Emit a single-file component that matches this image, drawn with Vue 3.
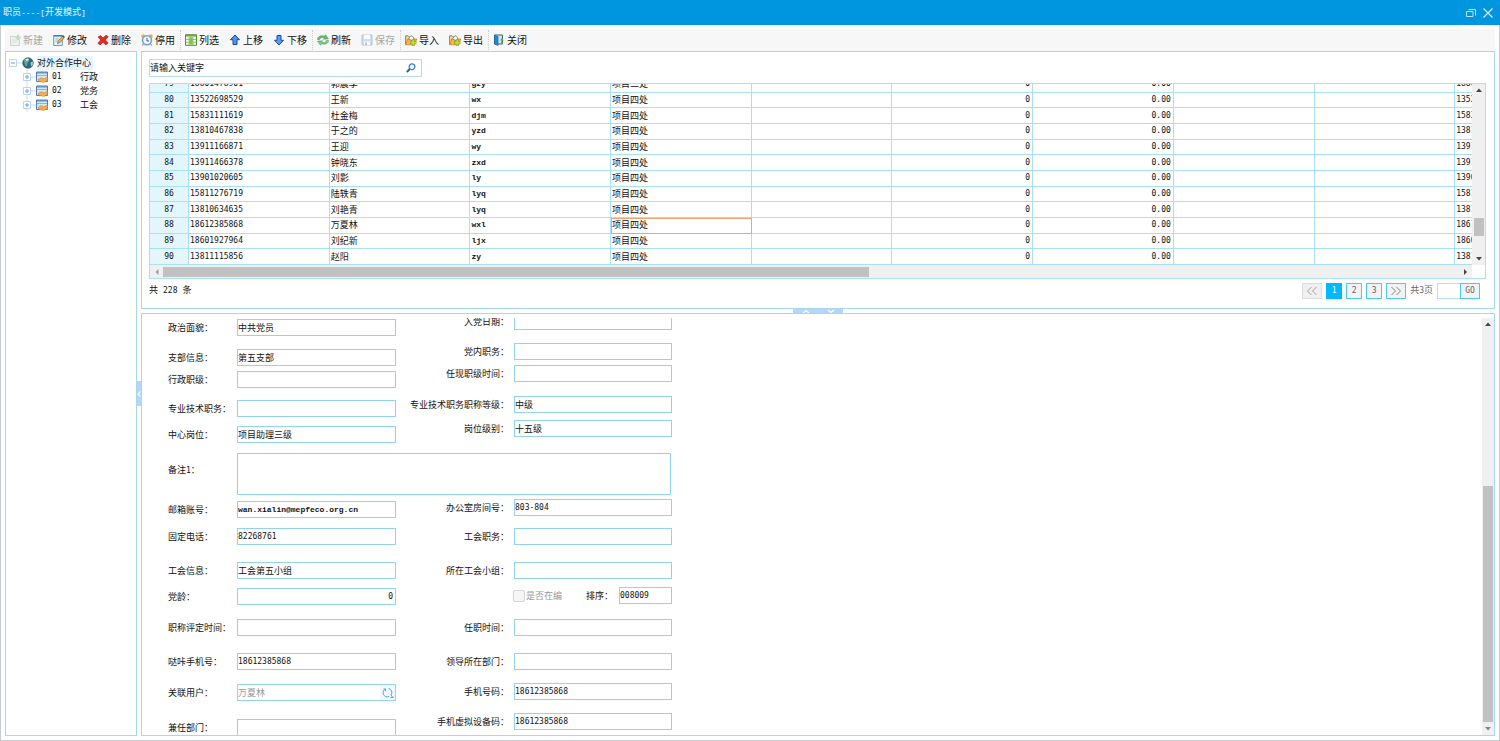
<script setup>
import { ref } from 'vue'

const toolGroups = [
  [
    { label: '新建', icon: 'new', disabled: true },
    { label: '修改', icon: 'edit' },
    { label: '删除', icon: 'delete' },
    { label: '停用', icon: 'clock' }
  ],
  [
    { label: '列选', icon: 'columns' },
    { label: '上移', icon: 'up' },
    { label: '下移', icon: 'down' }
  ],
  [
    { label: '刷新', icon: 'refresh' },
    { label: '保存', icon: 'save', disabled: true }
  ],
  [
    { label: '导入', icon: 'transfer' },
    { label: '导出', icon: 'transfer' }
  ],
  [{ label: '关闭', icon: 'close' }]
]

const tree = [
  { code: '01', name: '行政' },
  { code: '02', name: '党务' },
  { code: '03', name: '工会' }
]

const rows = [
  { no: 79, phone: '18801478901', name: '郭晨孚', py: 'gzy', dept: '项目三处', dev: '18801478901' },
  { no: 80, phone: '13522698529', name: '王新', py: 'wx', dept: '项目四处', dev: '13522698529' },
  { no: 81, phone: '15831111619', name: '杜金梅', py: 'djm', dept: '项目四处', dev: '15831111619' },
  { no: 82, phone: '13810467838', name: '于之的', py: 'yzd', dept: '项目四处', dev: '13810467838' },
  { no: 83, phone: '13911166871', name: '王迎', py: 'wy', dept: '项目四处', dev: '13911166871' },
  { no: 84, phone: '13911466378', name: '钟晓东', py: 'zxd', dept: '项目四处', dev: '13911466378' },
  { no: 85, phone: '13901020605', name: '刘影', py: 'ly', dept: '项目四处', dev: '13901020605' },
  { no: 86, phone: '15811276719', name: '陆轶青', py: 'lyq', dept: '项目四处', dev: '15811276719' },
  { no: 87, phone: '13810634635', name: '刘艳青', py: 'lyq', dept: '项目四处', dev: '13810634635' },
  { no: 88, phone: '18612385868', name: '万夏林', py: 'wxl', dept: '项目四处', dev: '18612385868', active: true },
  { no: 89, phone: '18601927964', name: '刘纪新', py: 'ljx', dept: '项目四处', dev: '18601927964' },
  { no: 90, phone: '13811115856', name: '赵阳', py: 'zy', dept: '项目四处', dev: '13811115856' }
]

const keyword = ref('')
const pageInput = ref('')
const note = ref('')
const employed = ref(false)

const topLeft = ref([
  { id: 'political', label: '政治面貌：', value: '中共党员' },
  { id: 'branch', label: '支部信息：', value: '第五支部' },
  { id: 'rank', label: '行政职级：', value: '' },
  { id: 'tech', label: '专业技术职务：', value: '' },
  { id: 'post', label: '中心岗位：', value: '项目助理三级' }
])
const topRight = ref([
  { id: 'joinDate', label: '入党日期：', value: '' },
  { id: 'partyPost', label: '党内职务：', value: '' },
  { id: 'rankTime', label: '任现职级时间：', value: '' },
  { id: 'techLevel', label: '专业技术职务职称等级：', value: '中级' },
  { id: 'postLevel', label: '岗位级别：', value: '十五级' }
])
const lowLeft = ref([
  { id: 'mail', label: '邮箱账号：', value: 'wan.xialin@mepfeco.org.cn', latin: true },
  { id: 'tel', label: '固定电话：', value: '82268761', num: true },
  { id: 'union', label: '工会信息：', value: '工会第五小组' },
  { id: 'partyAge', label: '党龄：', value: '0', num: true, right: true },
  { id: 'assess', label: '职称评定时间：', value: '' },
  { id: 'daka', label: '哒咔手机号：', value: '18612385868', num: true },
  { id: 'user', label: '关联用户：', value: '万夏林', lookup: true },
  { id: 'partTime', label: '兼任部门：', value: '' }
])
const lowRight = ref([
  { id: 'room', label: '办公室房间号：', value: '803-804', num: true },
  { id: 'unionPost', label: '工会职务：', value: '' },
  { id: 'unionGroup', label: '所在工会小组：', value: '' },
  { id: 'order', label: '排序：', value: '008009', num: true, order: true },
  { id: 'tenure', label: '任职时间：', value: '' },
  { id: 'leaderDept', label: '领导所在部门：', value: '' },
  { id: 'mobile', label: '手机号码：', value: '18612385868', num: true },
  { id: 'device', label: '手机虚拟设备码：', value: '18612385868', num: true }
])
const topBlocks = [
  { key: 'tl', side: 'left', fields: topLeft },
  { key: 'tr', side: 'right', fields: topRight }
]
const lowBlocks = [
  { key: 'll', side: 'left', fields: lowLeft },
  { key: 'lr', side: 'right', fields: lowRight }
]
</script>

<template>
  <div class="window">
    <header class="titlebar">
      <h1>职员<span class="mono">----[</span>开发模式<span class="mono">]</span></h1>
      <div class="win-buttons">
        <button type="button" aria-label="还原">
          <svg width="10" height="10" viewBox="0 0 10 10"><path d="M.5 3.500h6.500v5h-6.500zM2.500 1.500h7v6" fill="none" stroke="#b9e3f8" /></svg>
        </button>
        <button type="button" aria-label="关闭窗口">
          <svg width="10" height="10" viewBox="0 0 10 10"><path d="M.5.5l9 9M9.500.5l-9 9" fill="none" stroke="#d6effb" stroke-width="1.200" /></svg>
        </button>
      </div>
    </header>

    <div class="body">
      <nav class="toolbar">
        <div v-for="(group, gi) in toolGroups" :key="gi" class="tool-group">
          <button v-for="t in group" :key="t.label" type="button" class="tool" :disabled="t.disabled">
            <svg width="12" height="12" viewBox="0 0 12 12">
              <g v-if="t.icon === 'new'">
                <path d="M1.500 2.500h6l3 3v6h-9z" fill="#eef2ee" stroke="#cdd3d0" />
                <path d="M3 6h5M3 8h5" stroke="#dde1df" />
                <path d="M6.500 2.500h1.500V.8h2v1.700h1.700v2H10v1.700H8V4.500H6.500z" fill="#b9dcb9" />
              </g>
              <g v-else-if="t.icon === 'edit'">
                <path d="M.7 1.500h8.600v10H.7z" fill="#e3f1fc" stroke="#6d9cc8" />
                <path d="M.7 1.800h8.600" stroke="#2f7fc2" stroke-width="1.500" />
                <path d="M2.500 5h3M2.500 7h2" stroke="#86b4d8" />
                <path d="M4.500 9.500l.7-2.700L9.800 2l1.700 1.500L7 8.600z" fill="#f1b43d" stroke="#705230" stroke-width=".6" />
                <path d="M9 2.700l1-1.700 1.700 1.500-1 1.300z" fill="#46556b" />
              </g>
              <path v-else-if="t.icon === 'delete'" d="M1 3l2.500-1.500L6 4l3-2.800 2.200 1.500L8.300 6l2.900 3-2.400 2L6 8.200 3 11 .8 9.200 3.700 6z" fill="#e42a24" stroke="#b51512" stroke-width=".6" />
              <g v-else-if="t.icon === 'clock'">
                <circle cx="2.300" cy="2.300" r="2" fill="#f2b33c" /><circle cx="9.700" cy="2.300" r="2" fill="#f2b33c" />
                <path d="M2.500 10L1.300 11.500M9.500 10l1.200 1.500" stroke="#c98720" stroke-width="1.200" />
                <circle cx="6" cy="6.300" r="4.500" fill="#eef6fd" stroke="#6fa3d8" stroke-width="1.600" />
                <path d="M6 4v3h2" fill="none" stroke="#384b66" stroke-width=".9" />
              </g>
              <g v-else-if="t.icon === 'columns'">
                <path d="M.5.7h11v10.600H.5z" fill="#f5fbea" stroke="#4f8f32" />
                <path d="M1 1.800h10" stroke="#68a944" stroke-width="1.500" />
                <path d="M4 3v8M8 3v8M1 5.500h10M1 8.300h10" stroke="#82b95c" stroke-width=".8" />
                <path d="M4.500 3.200h3.200v7.500H4.500z" fill="#82c24f" />
              </g>
              <path v-else-if="t.icon === 'up'" d="M6 1l4.500 4.700H8v4.800H4V5.700H1.500z" fill="#4f93ee" stroke="#1848b4" />
              <path v-else-if="t.icon === 'down'" d="M6 11L1.500 6.300H4V1.500h4v4.800h2.500z" fill="#5a9cf0" stroke="#1848b4" />
              <g v-else-if="t.icon === 'refresh'">
                <path d="M.3 5.500C.6 2.300 4 .9 7.500 2.200L8.600.7l2.900 4.200-5.200.4 1-1.400C5.200 3 3.300 3.500 2.800 5.500z" fill="#6cb872" stroke="#36864a" stroke-width=".4" />
                <path d="M11.700 6.500c-.3 3.200-3.700 4.600-7.200 3.300l-1.100 1.500L.5 7.100l5.200-.4-1 1.400c2.100.9 4 .4 4.500-1.600z" fill="#7fc683" stroke="#36864a" stroke-width=".4" />
              </g>
              <g v-else-if="t.icon === 'save'">
                <path d="M1 1h10v10H1z" fill="#cfdded" stroke="#b3c5da" />
                <path d="M3 1h6v4H3zM3 7.500h6V11H3z" fill="#fbfcfe" />
                <path d="M4 8.500h2V11H4z" fill="#b3c5da" />
              </g>
              <g v-else-if="t.icon === 'transfer'">
                <path d="M.6 10.500V1.800h2.600l1 1.200h2v2" fill="#f7dd92" stroke="#7d7b68" stroke-width=".9" />
                <path d="M.6 10.800L2.600 5h9.200L9.500 10.800z" fill="#f2b34a" stroke="#b98126" stroke-width=".7" />
                <path d="M3.500 5L6 1.500l3 2.300-1.500 3z" fill="#f7f7f0" stroke="#75704f" stroke-width=".7" />
                <path d="M5.500 7.500h1.700V5.600h2.200v1.900h1.800v2.200H9.400v2H7.200v-2H5.500z" fill="#c3e32c" stroke="#6b9416" stroke-width=".5" />
              </g>
              <g v-else>
                <path d="M1.500 1h8v9h-8z" fill="#cfe5ec" stroke="#40657c" />
                <path d="M1.500 1L5 2.500v9L1.500 10z" fill="#2687d2" stroke="#155b96" stroke-width=".6" />
                <path d="M8.200 10V6.500H7L8.800 4l1.900 2.500H9.500V10z" fill="#66b62e" />
              </g>
            </svg>
            <span>{{ t.label }}</span>
          </button>
        </div>
      </nav>

      <div class="workspace">
        <aside class="tree-panel">
          <ul class="tree">
            <li class="tree-row root">
              <svg class="toggle" width="14" height="14" viewBox="0 0 14 14"><path d="M1.500 3.500h7v7h-7z" fill="#fff" stroke="#b9d4f4" /><path d="M3 7h4" stroke="#6f9cda" /><path d="M9 7h5" stroke="#c9dcf5" /></svg>
              <svg width="12" height="12" viewBox="0 0 12 12">
                <circle cx="6" cy="6" r="5.300" fill="#2e6a86" stroke="#1f4e6b" stroke-width=".6" />
                <path d="M2 3.500C3 1.500 5 1 6.500 1.500L7 3.500 5.500 6l-.7 3.500L3 8z" fill="#62ad8d" /><path d="M8.500 5.500l2.300-1 .2 3-1.800 2z" fill="#9fd3b2" />
                <path d="M3 2.500l3-1 1 1.500-2 1z" fill="#d8ecec" />
              </svg>
              <a href="#" class="root-name">对外合作中心</a>
            </li>
            <li v-for="n in tree" :key="n.code" class="tree-row child">
              <svg class="toggle" width="14" height="14" viewBox="0 0 14 14"><path d="M1.500 3.500h7v7h-7z" fill="#fff" stroke="#b9d4f4" /><path d="M3 7h4M5 5v4" stroke="#6f9cda" /><path d="M9 7h5M5 0v3M5 11v3" stroke="#c9dcf5" /></svg>
              <svg width="12" height="12" viewBox="0 0 12 12">
                <path d="M.5 1h11v9.500H.5z" fill="#d5e6f5" stroke="#4c7fae" />
                <path d="M1 1.800h10" stroke="#5b94c6" stroke-width="1.400" /><path d="M1 4.500h10" stroke="#8eb6d8" />
                <path d="M2 8.500l3-1.800 3 1 3.500-1.500v3.300L8 11.400 3 10.500z" fill="#f2ad52" stroke="#c27a24" stroke-width=".5" />
              </svg>
              <a href="#"><span class="num code">{{ n.code }}</span><span>{{ n.name }}</span></a>
            </li>
          </ul>
        </aside>

        <div class="v-split"><button type="button" aria-label="收起目录"><svg width="4" height="8" viewBox="0 0 4 8"><path d="M3.500 1.500L1 4l2.500 2.500" fill="none" stroke="#fff" stroke-width="1.200" /></svg></button></div>

        <main class="content">
          <section class="list-panel">
            <form class="search" role="search" @submit.prevent>
              <input v-model="keyword" type="text" placeholder="请输入关键字" aria-label="请输入关键字" />
              <button type="submit" aria-label="搜索">
                <svg width="10" height="10" viewBox="0 0 10 10"><circle cx="6" cy="3.800" r="2.900" fill="#eaf5fd" stroke="#3f7fca" stroke-width="1.300" /><path d="M3.800 6L.9 9" stroke="#2b57ad" stroke-width="1.900" /></svg>
              </button>
            </form>

            <div class="grid">
              <div class="grid-main">
                <div class="grid-view">
                  <table>
                    <colgroup><col class="col-no" /><col v-for="i in 10" :key="i" /></colgroup>
                    <tbody>
                      <tr v-for="r in rows" :key="r.no">
                        <th scope="row">{{ r.no }}</th>
                        <td class="num">{{ r.phone }}</td>
                        <td>{{ r.name }}</td>
                        <td class="latin">{{ r.py }}</td>
                        <td :class="{ active: r.active }">{{ r.dept }}</td>
                        <td></td>
                        <td class="num end">0</td>
                        <td class="num end">0.00</td>
                        <td></td>
                        <td></td>
                        <td class="num">{{ r.dev }}</td>
                      </tr>
                    </tbody>
                  </table>
                </div>
                <div class="scroll-v">
                  <svg width="12" height="12" viewBox="0 0 12 12"><path d="M3 8l3-3.500L9 8z" fill="#444" /></svg>
                  <div class="thumb-v"></div>
                  <svg width="12" height="12" viewBox="0 0 12 12"><path d="M3 4l3 3.500L9 4z" fill="#444" /></svg>
                </div>
              </div>
              <div class="scroll-h">
                <svg width="13" height="12" viewBox="0 0 13 12"><path d="M8.500 3L5.500 6l3 3z" fill="#999" /></svg>
                <div class="thumb-h"></div>
                <svg width="13" height="12" viewBox="0 0 13 12"><path d="M5 3l3 3-3 3z" fill="#444" /></svg>
              </div>
            </div>

            <footer class="pager">
              <span>共<span class="num total">228</span>条</span>
              <div class="pages">
                <button type="button" class="wide" disabled aria-label="上一页"><svg width="12" height="10" viewBox="0 0 12 10"><path d="M5.500 1l-4 4 4 4M10.500 1l-4 4 4 4" fill="none" stroke="#999" stroke-width=".9" /></svg></button>
                <button type="button" class="current">1</button>
                <button type="button">2</button>
                <button type="button">3</button>
                <button type="button" class="wide" aria-label="下一页"><svg width="12" height="10" viewBox="0 0 12 10"><path d="M1.500 1l4 4-4 4M6.500 1l4 4-4 4" fill="none" stroke="#777" stroke-width=".9" /></svg></button>
                <span class="page-total">共<span class="num">3</span>页</span>
                <div class="goto"><input v-model="pageInput" type="text" aria-label="页码" /><button type="button" class="wide">GO</button></div>
              </div>
            </footer>
          </section>

          <div class="h-split"><button type="button" aria-label="调整面板"><svg width="50" height="4" viewBox="0 0 50 4"><path d="M10 4l3-2.500L16 4M35 1l3 2.500L41 1" fill="none" stroke="#fff" stroke-width="1.200" /></svg></button></div>

          <section class="detail-panel">
            <form class="detail" @submit.prevent>
              <div class="blocks upper">
                <div v-for="b in topBlocks" :key="b.key" class="block" :class="b.side">
                  <div v-for="f in b.fields.value" :key="f.id" class="field">
                    <label :for="f.id">{{ f.label }}</label>
                    <input :id="f.id" v-model="f.value" type="text" />
                  </div>
                </div>
              </div>
              <div class="note">
                <label for="note">备注<span class="num">1</span>：</label>
                <textarea id="note" v-model="note"></textarea>
              </div>
              <div class="blocks lower">
                <div v-for="b in lowBlocks" :key="b.key" class="block" :class="b.side">
                  <div v-for="f in b.fields.value" :key="f.id" class="field" :class="{ ordered: f.order }">
                    <span v-if="f.order" class="check"><input id="employed" v-model="employed" type="checkbox" disabled /><label for="employed">是否在编</label></span>
                    <label :for="f.id">{{ f.label }}</label>
                    <div v-if="f.lookup" class="lookup">
                      <input :id="f.id" v-model="f.value" type="text" disabled />
                      <button type="button" aria-label="选择用户"><svg width="12" height="12" viewBox="0 0 12 12"><path d="M3.500 2A4 4 0 0 0 7 9.500M6.500 1.500A4 4 0 0 1 9 8l2 2.500M8.500 10.500h3M1.500 2h2v2" fill="none" stroke="#4ba6de" /></svg></button>
                    </div>
                    <input v-else :id="f.id" v-model="f.value" type="text" :class="{ num: f.num, latin: f.latin, end: f.right }" />
                  </div>
                </div>
              </div>
            </form>
            <div class="scroll-v tall">
              <svg width="12" height="12" viewBox="0 0 12 12"><path d="M3 8l3-3.500L9 8z" fill="#444" /></svg>
              <div class="thumb-v"></div>
              <svg width="12" height="12" viewBox="0 0 12 12"><path d="M3 4l3 3.500L9 4z" fill="#888" /></svg>
            </div>
          </section>
        </main>
      </div>
    </div>
  </div>
</template>

<style>
html, body, #app { height: 100%; }
body { margin: 0; overflow: hidden; }
</style>

<style scoped>
* { box-sizing: border-box; }
.window {
  --line: #a6d9e8;
  --cell: #a9e0f4;
  height: 100vh;
  display: flex;
  flex-direction: column;
  background: #fff;
  color: #111;
  font: 9px/14px "Noto Sans CJK SC", sans-serif;
}
button, input, textarea { font: inherit; color: inherit; margin: 0; padding: 0; border-radius: 0; outline: none; }
button { border: 0; background: none; }
svg { display: block; flex: none; }
a { color: inherit; text-decoration: none; }
.num, th { font-family: "DejaVu Sans Mono", monospace; font-size: 8px; }
.mono { font-family: "Liberation Mono", monospace; font-size: 8px; }
.latin { font-family: "Liberation Mono", monospace; font-size: 8px; font-weight: 700; }
.end { text-align: right; }

.titlebar { height: 25px; flex: none; display: flex; align-items: center; justify-content: space-between; padding: 0 7px 0 3px; background: #0096df; color: #e8f6fd; }
.titlebar h1 { margin: 0; font-size: 9px; font-weight: 400; }
.win-buttons { display: flex; gap: 7px; }

.body { flex: 1; min-height: 0; display: flex; flex-direction: column; padding: 4px; border: 1px solid #c6cbd0; border-top: 0; }
.toolbar { height: 22px; flex: none; display: flex; align-items: center; background: #f7f7f7; font-size: 10px; }
.tool-group { display: flex; gap: 10px; padding: 0 5px 0 4px; height: 20px; }
.tool-group + .tool-group { border-left: 1px dotted #a9dcec; }
.tool { display: flex; align-items: center; gap: 2px; white-space: nowrap; }
.tool:disabled { color: #a6a6a6; }

.workspace { flex: 1; min-height: 0; display: flex; }
.tree-panel { width: 132px; flex: none; border: 1px solid var(--line); }
.tree { list-style: none; margin: 0; padding: 4px 2px; }
.tree-row { display: flex; align-items: center; height: 14px; }
.root .root-name { margin-left: 3px; padding: 0 2px 0 0; background: #eaf4fe; }
.child { padding-left: 14px; }
.child a { display: flex; margin-left: 4px; }
.code { width: 28px; }
.v-split { width: 4px; flex: none; display: flex; align-items: center; }
.v-split button { width: 4px; height: 25px; background: #b5d6fa; display: grid; place-items: center; }
.content { flex: 1; min-width: 0; display: flex; flex-direction: column; }

.list-panel { flex: none; border: 1px solid var(--line); padding: 7px 8px 9px 7px; }
.search { width: 273px; height: 18px; display: flex; border: 1px solid #b7dbe9; }
.search input { flex: 1; min-width: 0; border: 0; }
.search input::placeholder { color: #111; opacity: 1; }
.search button { width: 20px; display: grid; place-items: center; }

.grid { margin-top: 6px; border: 1px solid var(--cell); }
.grid-main { display: flex; height: 181px; }
.grid-view { flex: 1; min-width: 0; overflow: hidden; display: flex; align-items: flex-end; }
table { table-layout: fixed; flex: none; width: 1446px; height: 188px; border-collapse: separate; border-spacing: 0; }
.col-no { width: 39px; }
th, td { padding: 0 1px; border-right: 1px solid var(--cell); border-bottom: 1px solid var(--cell); line-height: 14px; font-weight: 400; text-align: left; white-space: nowrap; overflow: hidden; }
td.latin { font-weight: 700; }
th { background: #e2f6fc; text-align: center; }
td.end { text-align: right; padding-right: 2px; }
td.active { outline: 1px solid #f2a36f; outline-offset: -1px; }
.scroll-v { width: 13px; flex: none; display: flex; flex-direction: column; align-items: center; justify-content: space-between; background: #f0f0f0; }
.thumb-v { width: 10px; background: #c1c1c1; }
.grid .thumb-v { height: 18px; margin-top: 104px; }
.scroll-h { height: 13px; margin-right: 13px; display: flex; align-items: center; background: #f0f0f0; }
.thumb-h { width: 53.4%; height: 10px; margin-right: auto; background: #c1c1c1; }

.pager { display: flex; align-items: center; justify-content: space-between; padding: 3px 6px 0 0; height: 20px; }
.total { margin: 0 5px; }
.pages { display: flex; align-items: center; gap: 4px; color: #666; }
.pages button { width: 16px; height: 16px; display: grid; place-items: center; border: 1px solid #4cc8f5; background: #f2f2f2; font: 8px/14px "DejaVu Sans Mono", monospace; }
.pages button.wide { width: 20px; }
.pages button:disabled { border-color: #dcdcdc; background: #f0f0f0; }
.pages button.current { background: #00b9ff; border-color: #00b9ff; color: #fff; }
.goto { display: flex; }
.goto input { width: 23px; height: 16px; border: 1px solid #b9dfef; border-right: 0; }

.h-split { height: 4px; flex: none; display: flex; justify-content: center; }
.h-split button { width: 50px; height: 4px; background: #b5d6fa; }

.detail-panel { flex: 1; min-height: 0; display: flex; border: 1px solid var(--line); padding: 4px 0 0; }
.detail { flex: 1; min-width: 0; overflow: hidden; }
.blocks { display: flex; }
.block { display: grid; align-items: start; }
.left { width: 254px; }
.right { width: 277px; }
.field { display: grid; height: 17px; align-items: center; }
.left .field { grid-template-columns: 69px 159px; padding-left: 26px; }
.right .field { grid-template-columns: 113px 158px; column-gap: 5px; }
.right label { text-align: right; }
.upper { height: 135px; align-items: flex-start; }
.upper .left { grid-template-rows: 30px 22px 29px 26px 17px; padding-top: 1px; }
.upper .right { grid-template-rows: 30px 22px 31px 24px 17px; margin-top: -5px; }
.lower { align-items: flex-start; }
.lower .left { grid-template-rows: 27px 34px 26px 31px 34px 31px 35px 17px; padding-top: 2px; }
.lower .right { grid-template-rows: 29px 34px 25px 32px 34px 30px 30px 17px; }
.field label, .note label { white-space: nowrap; }
.field input, .note textarea { width: 100%; height: 17px; border: 1px solid #93d3ec; background: #fff; padding: 0; }
.field input.end { padding-right: 2px; }
.note { display: grid; grid-template-columns: 69px 434px; align-items: center; padding-left: 26px; height: 46px; padding-bottom: 4px; }
.note label { padding-bottom: 7px; }
.note textarea { height: 42px; resize: none; display: block; }
.lookup { display: flex; border: 1px solid #93d3ec; height: 17px; }
.field .lookup input { border: 0; height: 15px; flex: 1; min-width: 0; color: #999; }
.lookup button { width: 15px; background: #f3f8fb; display: grid; place-items: center; }
.right .field.ordered { grid-template-columns: 60px 34px 53px; justify-content: end; column-gap: 6px; padding-right: 1px; }
.check { display: flex; align-items: center; gap: 1px; color: #999; }
.check input { appearance: none; width: 12px; height: 12px; flex: none; border: 1px solid #d5d5d5; border-radius: 2px; background: #f6f6f6; }
.tall { width: 12px; }
.tall .thumb-v { height: 236px; margin-top: 155px; }
</style>
